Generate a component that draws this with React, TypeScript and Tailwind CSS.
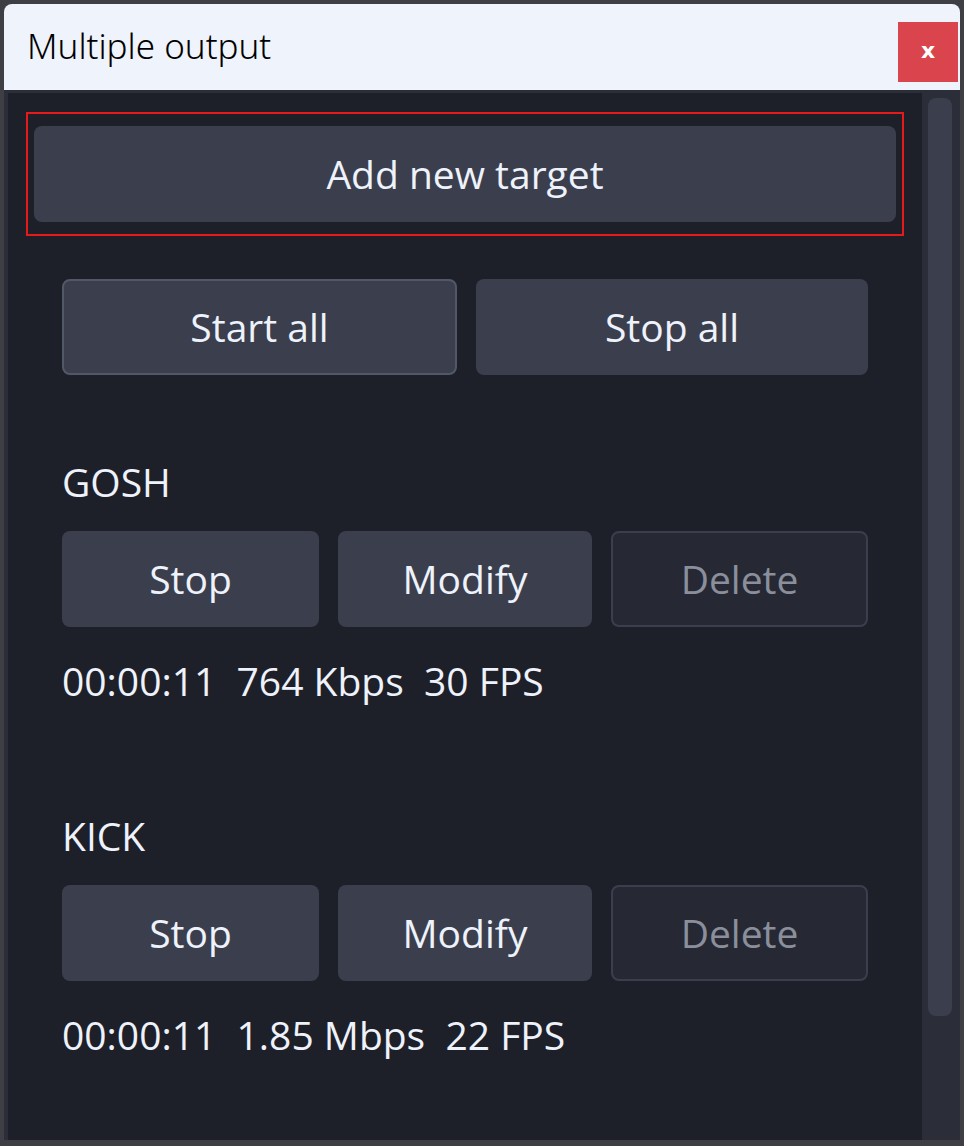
import React from 'react';

const font = { fontFamily: '"Open Sans", "Noto Sans", sans-serif' };

interface Target {
  name: string;
  stats: string;
}

const targets: Target[] = [
  { name: 'GOSH', stats: '00:00:11\u00a0\u00a0764 Kbps\u00a0\u00a030 FPS' },
  { name: 'KICK', stats: '00:00:11\u00a0\u00a01.85 Mbps\u00a0\u00a022 FPS' },
];

function TargetBlock({ target, first }: { target: Target; first: boolean }) {
  return (
    <div className={first ? 'mt-[83px]' : 'mt-[107px]'}>
      <div className="h-[48px] leading-[48px] text-[39px] text-[#eef2fb]">{target.name}</div>
      <div className="mt-[25px] grid grid-cols-[257px_254px_257px] gap-[19px]">
        <button className="h-[96px] rounded-[8px] bg-[#3b3f4d] text-[39px] text-[#eef2fb]">Stop</button>
        <button className="h-[96px] rounded-[8px] bg-[#3b3f4d] text-[39px] text-[#eef2fb]">Modify</button>
        <button className="h-[96px] rounded-[8px] border-2 border-[#3b3f4d] bg-[#262934] text-[39px] text-[#8a8f9b]">
          Delete
        </button>
      </div>
      <div className="mt-[30px] h-[48px] leading-[48px] text-[39px] text-[#eef2fb]">{target.stats}</div>
    </div>
  );
}

export default function App() {
  return (
    <div className="w-[964px] h-[1146px] overflow-hidden bg-[#3e3f44] pl-[4px] pt-[4px]" style={font}>
      <div className="flex flex-col w-[956px] h-[1136px] rounded-t-[8px] overflow-hidden">
        {/* title bar */}
        <div className="h-[86px] shrink-0 bg-[#eff3fb] flex items-start justify-between pl-[23px] pr-[2px]">
          <div
            className="mt-[19px] text-[35px] leading-[46px] text-black"
            style={{ fontFamily: '"Noto Sans", "Open Sans", sans-serif', fontWeight: 300 }}
          >
            Multiple output
          </div>
          <button className="mt-[18px] w-[60px] h-[60px] bg-[#d9444d] flex items-center justify-center">
            <span
              className="text-white text-[22px] font-bold leading-none -mt-[2px]"
              style={{ fontFamily: '"DejaVu Sans", sans-serif' }}
            >
              x
            </span>
          </button>
        </div>

        {/* body */}
        <div className="flex-1 flex bg-[#2b2e39] pt-[3px] pl-[4px] pr-[2px]">
          <div className="flex-1 bg-[#1e2029] pt-[19px] px-[18px]">
            <div className="border-2 border-[#e8191b] px-[6px] py-[12px]">
              <button className="w-full h-[96px] rounded-[8px] bg-[#3b3f4d] text-[39px] text-[#eef2fb]">
                Add new target
              </button>
            </div>

            <div className="px-[36px]">
              <div className="mt-[43px] grid grid-cols-[395px_392px] gap-[19px]">
                <button className="h-[96px] rounded-[8px] border-2 border-[#535868] bg-[#3b3f4d] text-[39px] text-[#eef2fb]">
                  Start all
                </button>
                <button className="h-[96px] rounded-[8px] bg-[#3b3f4d] text-[39px] text-[#eef2fb]">Stop all</button>
              </div>

              {targets.map((t, i) => (
                <TargetBlock key={t.name} target={t} first={i === 0} />
              ))}
            </div>
          </div>

          {/* scrollbar */}
          <div className="w-[36px] shrink-0 pt-[5px] pl-[6px]">
            <div className="w-[24px] h-[918px] rounded-[8px] bg-[#3b3f4d]" />
          </div>
        </div>
      </div>
    </div>
  );
}
